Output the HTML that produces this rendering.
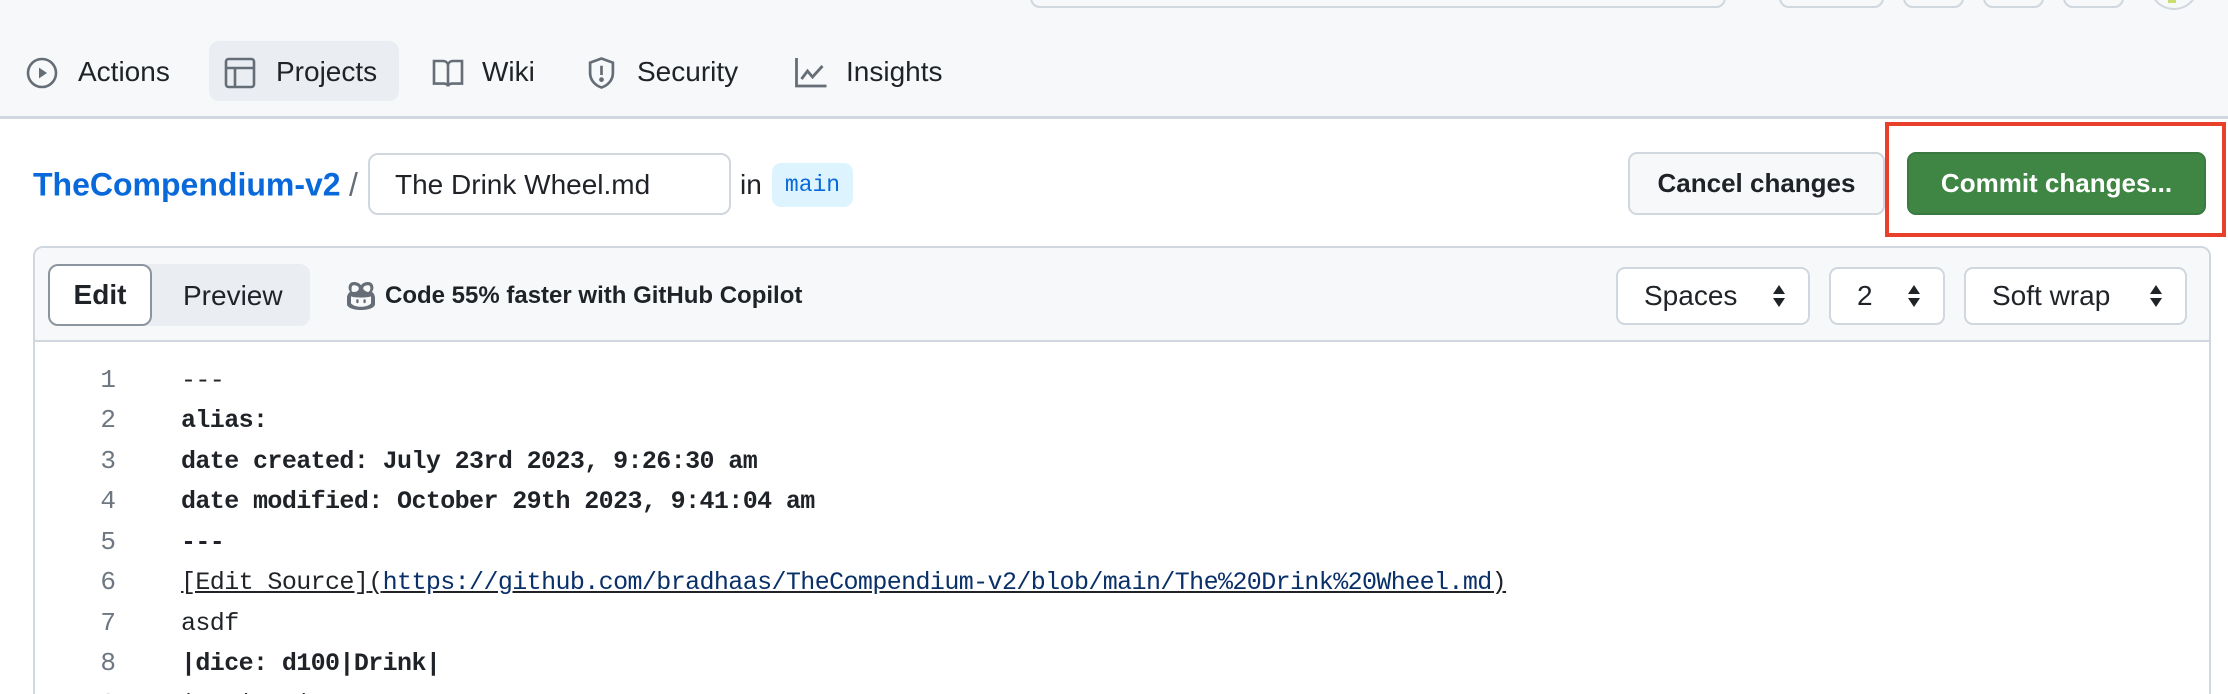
<!DOCTYPE html>
<html style="overflow:hidden;height:694px"><head><meta charset="utf-8">
<style>
*{box-sizing:border-box;margin:0;padding:0}
html,body{overflow:hidden}
body{width:2228px;height:694px;overflow:hidden;background:#fff;font-family:"Liberation Sans",sans-serif;color:#1f2328;position:relative}
.abs{position:absolute}
.nav{left:0;top:0;width:2228px;height:119px;background:#f6f8fa;border-bottom:3px solid #d0d7de}
.ni{position:absolute;top:72px;transform:translateY(-50%);font-size:28px;color:#1f2328;white-space:nowrap}
.ic{position:absolute}
.btn{position:absolute;border:2px solid #d0d7de;border-radius:9px;background:#f6f8fa;font-size:26px;font-weight:bold;display:flex;align-items:center;justify-content:center}
.sel{position:absolute;top:267px;height:58px;border:2px solid #d0d7de;border-radius:9px;background:#fff;font-size:28px;display:flex;align-items:center;padding-left:26px}
.arr{position:absolute;right:22px;top:50%;transform:translateY(-50%);width:14px;height:24px}
.ln{position:absolute;left:36px;width:80px;text-align:right;font-family:"Liberation Mono",monospace;font-size:26px;color:#6e7781}
.cd{position:absolute;left:181px;font-family:"Liberation Mono",monospace;font-size:25px;letter-spacing:-0.6px;color:#1f2328;white-space:pre}
.b{font-weight:bold}
</style></head><body>
<div class="abs nav"></div>
<div class="abs" style="left:1030px;top:-20px;width:696px;height:28px;border:2px solid #d0d7de;border-radius:10px;background:#f6f8fa"></div>
<div class="abs" style="left:1779px;top:-20px;width:105px;height:28px;border:2px solid #d0d7de;border-radius:10px"></div>
<div class="abs" style="left:1903px;top:-20px;width:61px;height:28px;border:2px solid #d0d7de;border-radius:10px"></div>
<div class="abs" style="left:1983px;top:-20px;width:61px;height:28px;border:2px solid #d0d7de;border-radius:10px"></div>
<div class="abs" style="left:2063px;top:-20px;width:61px;height:28px;border:2px solid #d0d7de;border-radius:10px"></div>
<div class="abs" style="left:2149px;top:-40px;width:50px;height:50px;border:2px solid #d0d7de;border-radius:50%"></div>
<div class="abs" style="left:2168px;top:0;width:8px;height:3px;background:#c9de6e"></div>

<div class="abs" style="left:209px;top:41px;width:190px;height:60px;background:#eaeef2;border-radius:10px"></div>
<svg class="ic" style="left:26px;top:57px" width="32" height="32" viewBox="0 0 16 16" fill="none" stroke="#656d76" stroke-width="1.3"><circle cx="8" cy="8" r="7"/><path d="M6.5 5.3v5.4L10.5 8z" fill="#656d76" stroke="none"/></svg>
<div class="ni" style="left:78px">Actions</div>
<svg class="ic" style="left:224px;top:57px" width="32" height="32" viewBox="0 0 16 16" fill="none" stroke="#656d76" stroke-width="1.3"><rect x="1" y="1" width="14" height="14" rx="1.3"/><path d="M1 5.5h14M5.5 5.5V15"/></svg>
<div class="ni" style="left:276px">Projects</div>
<svg class="ic" style="left:432px;top:58px" width="32" height="30" viewBox="0 0 16 15" fill="none" stroke="#656d76" stroke-width="1.3"><path d="M1 1.5h4.5C7 1.5 8 2.5 8 4v10c-.4-.8-1.2-1.2-2-1.2H1zM15 1.5h-4.5C9 1.5 8 2.5 8 4v10c.4-.8 1.2-1.2 2-1.2h5z"/></svg>
<div class="ni" style="left:482px">Wiki</div>
<svg class="ic" style="left:587px;top:56px" width="29" height="34" viewBox="0 0 14 16" fill="none" stroke="#656d76" stroke-width="1.3"><path d="M7 1L1.5 3v5c0 3.5 2.5 6 5.5 7 3-1 5.5-3.5 5.5-7V3z"/><path d="M7 4.5v4.5"/><circle cx="7" cy="11.2" r=".5" fill="#656d76"/></svg>
<div class="ni" style="left:637px">Security</div>
<svg class="ic" style="left:794px;top:58px" width="33" height="30" viewBox="0 0 16 15" fill="none" stroke="#656d76" stroke-width="1.4"><path d="M1 0v14h15"/><path d="M3.5 10.5l3-4 2.5 3 5-5.5"/></svg>
<div class="ni" style="left:846px">Insights</div>

<div class="abs" style="left:33px;top:185px;transform:translateY(-50%);font-size:32px;font-weight:bold;color:#0969da">TheCompendium-v2</div>
<div class="abs" style="left:349px;top:185px;transform:translateY(-50%);font-size:32px;color:#656d76">/</div>
<div class="abs" style="left:368px;top:153px;width:363px;height:62px;border:2px solid #d0d7de;border-radius:10px;background:#fff"></div>
<div class="abs" style="left:395px;top:185px;transform:translateY(-50%);font-size:28px">The Drink Wheel.md</div>
<div class="abs" style="left:740px;top:185px;transform:translateY(-50%);font-size:28px">in</div>
<div class="abs" style="left:772px;top:163px;width:81px;height:44px;background:#ddf4ff;border-radius:9px;font-family:'Liberation Mono',monospace;font-size:23px;color:#0969da;display:flex;align-items:center;justify-content:center">main</div>

<div class="btn" style="left:1628px;top:152px;width:257px;height:63px;color:#1f2328">Cancel changes</div>
<div class="btn" style="left:1907px;top:152px;width:299px;height:63px;background:#3f8645;border-color:#3a7a40;color:#fff">Commit changes...</div>
<div class="abs" style="left:1885px;top:122px;width:341px;height:115px;border:4px solid #e8402a"></div>

<div class="abs" style="left:33px;top:246px;width:2178px;height:460px;border:2px solid #d0d7de;border-radius:10px 10px 0 0"></div>
<div class="abs" style="left:35px;top:248px;width:2174px;height:94px;background:#f6f8fa;border-bottom:2px solid #d0d7de;border-radius:9px 9px 0 0"></div>
<div class="abs" style="left:48px;top:264px;width:262px;height:62px;background:#eaeef2;border-radius:10px"></div>
<div class="abs" style="left:48px;top:264px;width:104px;height:62px;background:#fff;border:2px solid #8c959f;border-radius:10px;font-size:28px;font-weight:bold;display:flex;align-items:center;justify-content:center">Edit</div>
<div class="abs" style="left:183px;top:296px;transform:translateY(-50%);font-size:28px">Preview</div>
<svg class="ic" style="left:345px;top:280px" width="32" height="32" viewBox="0 0 16 16" fill="#656d76"><path d="M4.5 1C2.8 1 1.8 2.2 1.8 3.8c0 .9.3 1.6.8 2.1-.9.6-1.6 1.7-1.6 3.1V12c0 1.7 2.7 3 7 3s7-1.3 7-3V9c0-1.4-.7-2.5-1.600-3.1.5-.5.8-1.2.8-2.1C14.2 2.2 13.2 1 11.5 1 10 1 8.8 1.6 8 2.6 7.2 1.6 6 1 4.5 1zm0 1.6c1.3 0 2.4.6 2.4 1.6S6 6 4.5 6 3.3 5.3 3.3 4.2s.4-1.6 1.2-1.6zm7 0c.8 0 1.2.5 1.2 1.6S12 6 11.5 6 9.1 5.2 9.1 4.2s1.1-1.6 2.4-1.6zM3 8.2c1 .4 3 .6 5 .6s4-.2 5-.6v3.5C12.3 12.6 10.5 13.4 8 13.4S3.7 12.6 3 11.7z"/><rect x="5.6" y="9.6" width="1.2" height="2" rx=".6"/><rect x="9.2" y="9.6" width="1.2" height="2" rx=".6"/></svg>
<div class="abs" style="left:385px;top:296px;transform:translateY(-50%);font-size:24px;font-weight:bold;color:#1f2328">Code 55% faster with GitHub Copilot</div>

<div class="sel" style="left:1616px;width:194px">Spaces<svg class="arr" viewBox="0 0 14 24"><path d="M7 1l6 9H1zM7 23l6-9H1z" fill="#1f2328"/></svg></div>
<div class="sel" style="left:1829px;width:116px">2<svg class="arr" viewBox="0 0 14 24"><path d="M7 1l6 9H1zM7 23l6-9H1z" fill="#1f2328"/></svg></div>
<div class="sel" style="left:1964px;width:223px">Soft wrap<svg class="arr" viewBox="0 0 14 24"><path d="M7 1l6 9H1zM7 23l6-9H1z" fill="#1f2328"/></svg></div>

<div class="ln" style="top:365px">1</div><div class="cd" style="top:366px">---</div>
<div class="ln" style="top:405px">2</div><div class="cd b" style="top:406px">alias:</div>
<div class="ln" style="top:446px">3</div><div class="cd b" style="top:447px">date created: July 23rd 2023, 9:26:30 am</div>
<div class="ln" style="top:486px">4</div><div class="cd b" style="top:487px">date modified: October 29th 2023, 9:41:04 am</div>
<div class="ln" style="top:527px">5</div><div class="cd b" style="top:528px">---</div>
<div class="ln" style="top:567px">6</div><div class="cd" style="top:568px;text-decoration:underline"><span>[Edit Source]</span>(<span style="color:#0a3069">https://github.com/bradhaas/TheCompendium-v2/blob/main/The%20Drink%20Wheel.md</span>)</div>
<div class="ln" style="top:608px">7</div><div class="cd" style="top:609px">asdf</div>
<div class="ln" style="top:648px">8</div><div class="cd b" style="top:649px">|dice: d100|Drink|</div>
<div class="ln" style="top:689px">9</div><div class="cd" style="top:690px">|---|---|</div>
</body></html>
